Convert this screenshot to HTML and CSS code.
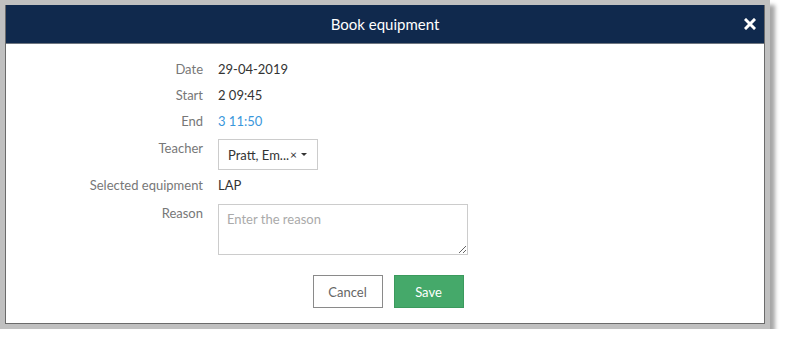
FILE: index.html
```html
<!DOCTYPE html>
<html lang="en">
<head>
  <meta charset="UTF-8" />
  <title>Book equipment</title>
  <link rel="stylesheet" href="styles.css">
</head>
<body>
  <div class="frame">
    <div class="modal">
      <div class="modal-header">
        <h1>Book equipment</h1>
        <span class="close">
          <svg width="12" height="12" viewBox="0 0 12 12"><path d="M2 2 L10 10 M10 2 L2 10" stroke="#fff" stroke-width="3" stroke-linecap="square"/></svg>
        </span>
      </div>

      <div class="modal-body">
        <div class="row">
          <label class="row-label">Date</label>
          <div class="row-value">29-04-2019</div>
        </div>
        <div class="row">
          <label class="row-label">Start</label>
          <div class="row-value">2 09:45</div>
        </div>
        <div class="row">
          <label class="row-label">End</label>
          <div class="row-value link">3 11:50</div>
        </div>
        <div class="row row-field">
          <label class="row-label">Teacher</label>
          <div class="select-box">
            <span>Pratt, Em...</span><span class="clear">×</span><span class="caret"></span>
          </div>
        </div>
        <div class="row">
          <label class="row-label">Selected equipment</label>
          <div class="row-value">LAP</div>
        </div>
        <div class="row row-field">
          <label class="row-label">Reason</label>
          <textarea class="reason" placeholder="Enter the reason"></textarea>
        </div>

        <div class="actions">
          <button class="btn btn-cancel">Cancel</button>
          <button class="btn btn-save">Save</button>
        </div>
      </div>
    </div>
  </div>
</body>
</html>
```

FILE: styles.css
```css
body {
  margin: 0;
  background: #fff;
  font-family: Lato, 'Liberation Sans', sans-serif;
}
.frame {
  width: 760px;
  height: 319px;
  padding: 5px;
  background: #c0c0c0;
  box-shadow: 5px 5px 4px rgba(0, 0, 0, 0.35);
}
.modal {
  height: 318px;
  background: #fff;
  border: 1px solid #6b6b6b;
  border-top: none;
  display: flex;
  flex-direction: column;
}
.modal-header {
  height: 38px;
  background: #10294d;
  border-bottom: 1px solid #6f7680;
  display: flex;
  align-items: center;
  justify-content: center;
  position: relative;
}
.modal-header h1 {
  margin: 0;
  font-size: 15px;
  font-weight: 400;
  color: #fff;
}
.close {
  position: absolute;
  right: 8px;
  top: 13px;
  line-height: 0;
}
.modal-body {
  padding-top: 12px;
  font-size: 13px;
  color: #333;
}
.row {
  display: flex;
  gap: 15px;
  line-height: 26px;
}
.row-label {
  width: 197px;
  text-align: right;
  color: #777;
}
.row-field {
  line-height: 18px;
  margin-top: 5px;
  margin-bottom: 2px;
}
.row-field + .row + .row-field {
  margin-top: 6px;
}
.link {
  color: #3a97db;
}
.select-box {
  width: 89px;
  height: 29px;
  border: 1px solid #ccc;
  padding: 0 0 0 9px;
  display: flex;
  align-items: center;
  white-space: nowrap;
  color: #333;
}
.clear {
  font-size: 12px;
  margin-left: 1px;
}
.caret {
  width: 0;
  height: 0;
  margin-left: 4px;
  border-left: 3px solid transparent;
  border-right: 3px solid transparent;
  border-top: 3px solid #333;
}
.reason {
  margin: 0;
  padding: 6px 8px 4px;
  box-sizing: border-box;
  width: 250px;
  height: 51px;
  border: 1px solid #ccc;
  font-family: Lato, 'Liberation Sans', sans-serif;
  font-size: 13px;
  resize: vertical;
}
.reason::placeholder {
  color: #aaa;
}
.actions {
  display: flex;
  justify-content: center;
  gap: 11px;
  margin-top: 20px;
  padding-left: 6px;
}
.btn {
  width: 70px;
  height: 33px;
  font-family: Lato, 'Liberation Sans', sans-serif;
  font-size: 13px;
  cursor: pointer;
}
.btn-cancel {
  background: #fff;
  border: 1px solid #8a8a8a;
  color: #666;
}
.btn-save {
  background: #45a96a;
  border: 1px solid #3b9a5d;
  color: #fff;
}
```
